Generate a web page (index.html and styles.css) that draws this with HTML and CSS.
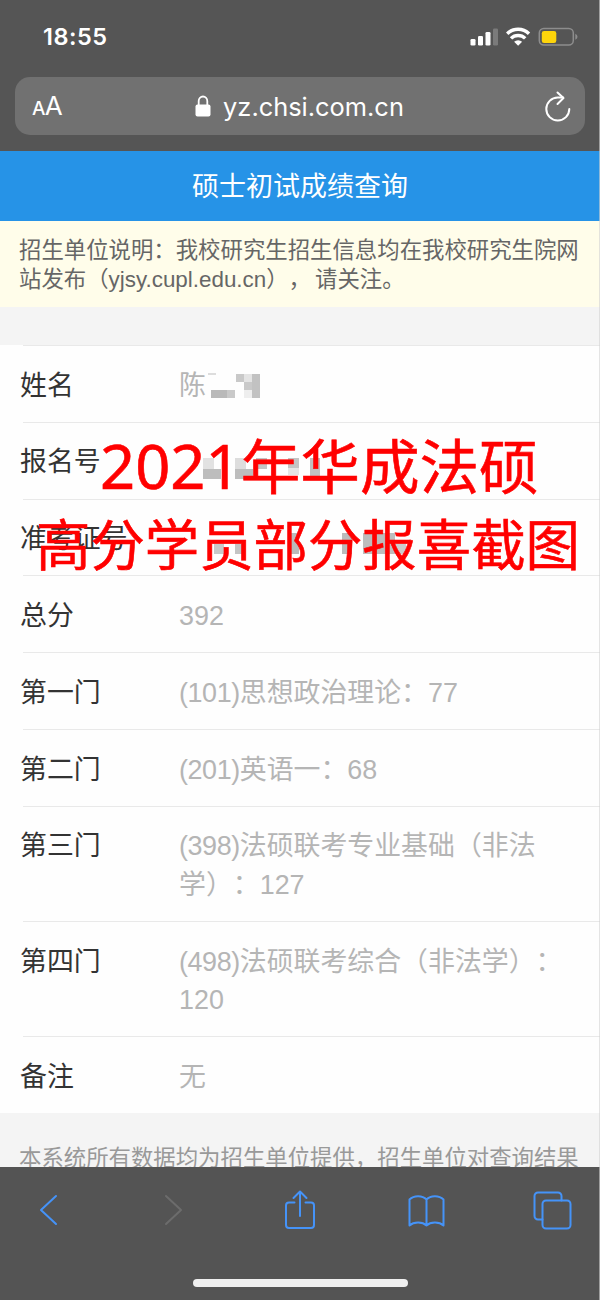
FILE: index.html
```html
<!DOCTYPE html>
<html lang="zh-CN">
  <head>
    <meta charset="UTF-8" />
    <meta name="viewport" content="width=device-width, initial-scale=1.0" />
    <title>硕士初试成绩查询</title>
    <link rel="stylesheet" href="styles.css">
  </head>
  <body>
    <div class="phone">
      <header class="browser">
        <div class="status">
          <span class="time">18:55</span>
          <svg class="status-icons" width="110" height="20" viewBox="0 0 110 20">
            <g fill="#fff">
              <rect x="0.5" y="12" width="5" height="6.5" rx="1.3" />
              <rect x="8" y="9" width="5" height="9.5" rx="1.3" />
              <rect x="15.5" y="5" width="5" height="13.5" rx="1.3" />
              <rect x="23" y="1.5" width="5" height="17" rx="1.3" fill="#7b7b7b" />
            </g>
            <g fill="none" stroke="#fff" stroke-width="3.4">
              <path d="M37.2 6.7 A15.5 15.5 0 0 1 59 6.7" />
              <path d="M41 11.4 A10 10 0 0 1 55.2 11.4" />
            </g>
            <path d="M44.1 14.8 A6 6 0 0 1 52.1 14.8 L48.1 18.8 Z" fill="#fff" />
            <rect x="69.3" y="1.5" width="34" height="16.5" rx="4.5" fill="none" stroke="#8d8d8d" stroke-width="1.5" />
            <rect x="71.8" y="4" width="14.5" height="12" rx="2.3" fill="#fed50b" />
            <path d="M105.3 6.7 Q107.5 7.5 107.5 9.8 Q107.5 12 105.3 12.8 Z" fill="#8d8d8d" />
          </svg>
        </div>
        <div class="address">
          <span class="text-size"><small>A</small>A</span>
          <div class="site">
            <svg width="16" height="22" viewBox="0 0 16 22">
              <rect x="0.5" y="9.5" width="15" height="12" rx="2" fill="#fff" />
              <path d="M3.7 10 V6 a4.3 4.5 0 0 1 8.6 0 V10" fill="none" stroke="#fff" stroke-width="1.8" />
            </svg>
            <span class="url">yz.chsi.com.cn</span>
          </div>
          <svg class="reload" width="28" height="32" viewBox="0 0 28 32" fill="none" stroke="#fff" stroke-width="2" stroke-linecap="round" stroke-linejoin="round">
            <path d="M25.3 18 A11.5 11.5 0 1 1 13.8 6.5 H19" />
            <path d="M13.5 1.5 L19.5 7 L13.5 13" />
          </svg>
        </div>
      </header>

      <h1 class="title">硕士初试成绩查询</h1>
      <p class="notice">招生单位说明：我校研究生招生信息均在我校研究生院网<br>站发布（yjsy.cupl.edu.cn），<span class="follow">请关注。</span></p>

      <main class="scores">
        <dl class="row">
          <dt>姓名</dt>
          <dd class="masked">陈<svg class="name-mask" width="54" height="26" viewBox="0 0 54 26">
              <rect x="2" y="0" width="8" height="2" fill="#ddd" />
              <rect x="5" y="17" width="17" height="8" fill="#b9b9b9" />
              <rect x="21" y="17" width="8" height="8" fill="#c9c9c9" />
              <rect x="30" y="1" width="8" height="8" fill="#c9c9c9" />
              <rect x="38" y="1" width="8" height="8" fill="#e4e4e4" />
              <rect x="38" y="9" width="8" height="8" fill="#c9c9c9" />
              <rect x="38" y="17" width="8" height="8" fill="#eee" />
              <rect x="46" y="1" width="8" height="24" fill="#c2c2c2" />
            </svg></dd>
        </dl>
        <dl class="row">
          <dt>报名号</dt>
          <dd class="masked"><svg class="number-mask" width="130" height="22" viewBox="0 0 130 22">
              <rect x="0" y="0" width="11" height="11" fill="#e2e2e2" />
              <rect x="0" y="11" width="18" height="10" fill="#bdbdbd" />
              <rect x="32" y="0" width="11" height="11" fill="#ddd" />
              <rect x="32" y="11" width="18" height="10" fill="#bdbdbd" />
              <rect x="53" y="0" width="11" height="11" fill="#c4c4c4" />
              <rect x="85" y="0" width="11" height="10" fill="#c4c4c4" />
              <rect x="85" y="10" width="11" height="7" fill="#e6e6e6" />
              <rect x="107" y="0" width="10" height="19" fill="#c0c0c0" />
            </svg></dd>
        </dl>
        <dl class="row">
          <dt>准考证号</dt>
          <dd class="masked"><svg class="ticket-mask" width="200" height="22" viewBox="0 0 200 22">
              <rect x="0" y="11" width="10" height="10" fill="#c9c9c9" />
              <rect x="21" y="11" width="8" height="10" fill="#c4c4c4" />
              <rect x="75" y="0" width="10" height="21" fill="#bbb" />
              <rect x="128" y="0" width="10" height="21" fill="#bbb" />
              <rect x="149" y="0" width="32" height="21" fill="#bdbdbd" />
              <rect x="181" y="11" width="11" height="10" fill="#ccc" />
            </svg></dd>
        </dl>
        <dl class="row"><dt>总分</dt><dd>392</dd></dl>
        <dl class="row"><dt>第一门</dt><dd><span class="code">(101)</span>思想政治理论：77</dd></dl>
        <dl class="row"><dt>第二门</dt><dd><span class="code">(201)</span>英语一：68</dd></dl>
        <dl class="row"><dt>第三门</dt><dd><span class="code">(398)</span>法硕联考专业基础（非法<br>学）：127</dd></dl>
        <dl class="row"><dt>第四门</dt><dd><span class="code">(498)</span>法硕联考综合（非法学）：<br>120</dd></dl>
        <dl class="row"><dt>备注</dt><dd>无</dd></dl>
      </main>

      <p class="source">本系统所有数据均为招生单位提供，招生单位对查询结果</p>

      <footer class="toolbar">
        <nav class="tools">
          <svg width="20" height="32" viewBox="0 0 20 32"><path d="M18 2 L3 16 L18 30" /></svg>
          <svg class="disabled" width="20" height="32" viewBox="0 0 20 32"><path d="M2 2 L17 16 L2 30" /></svg>
          <svg width="32" height="40" viewBox="0 0 32 40">
            <path d="M10.5 12.5 H5 a3 3 0 0 0 -3 3 V35 a3 3 0 0 0 3 3 H27 a3 3 0 0 0 3 -3 V15.5 a3 3 0 0 0 -3 -3 H21.5" />
            <path d="M16 26 V1.5 M9.5 8 L16 1.5 L22.5 8" />
          </svg>
          <svg class="book" width="37" height="34" viewBox="0 0 37 34">
            <path d="M18.5 31.5 V5.5 C14.5 1.3 6 1 1.5 5.5 V31.5 C6 27.5 14.5 27.8 18.5 31.5 C22.5 27.8 31 27.5 35.5 31.5 V5.5 C31 1 22.5 1.3 18.5 5.5" />
          </svg>
          <svg width="39" height="39" viewBox="0 0 39 39">
            <path d="M9.5 28.5 H5 a3.5 3.5 0 0 1 -3.5 -3.5 V5 A3.5 3.5 0 0 1 5 1.5 H25 A3.5 3.5 0 0 1 28.5 5 V9.5" />
            <rect x="9.5" y="9.5" width="28" height="28" rx="3.5" />
          </svg>
        </nav>
        <div class="home-bar"></div>
      </footer>

      <div class="caption">
        <div class="caption-top"><span>2021</span>年华成法硕</div>
        <div class="caption-bottom">高分学员部分报喜截图</div>
      </div>
    </div>
  </body>
</html>
```
FILE: styles.css
```css
* {
  box-sizing: border-box;
}

body {
  margin: 0;
  font-family: "Liberation Sans", "Noto Sans CJK SC", sans-serif;
  background-color: #f4f4f4;
  text-spacing-trim: space-all;
}

.phone {
  position: relative;
  width: 600px;
  height: 1300px;
  display: flex;
  flex-direction: column;
  overflow: hidden;
}

/* thin edge on the right side */
.phone::after {
  content: "";
  position: absolute;
  top: 0;
  right: 0;
  bottom: 0;
  width: 1px;
  background-color: rgba(210, 210, 210, 0.6);
}

/* browser bar */
.browser {
  height: 151px;
  flex: none;
  padding: 0 15px;
  background-color: #555;
  color: #fff;
}

.status {
  height: 77px;
  display: flex;
  justify-content: space-between;
  padding: 22px 5px 0 28px;
}

.time {
  font: 600 23.5px/30px Inter, sans-serif;
  letter-spacing: 0.5px;
}

.status-icons {
  margin-top: 5px;
}

.address {
  height: 58px;
  display: flex;
  justify-content: space-between;
  align-items: center;
  padding: 1px 13px 0 17px;
  border-radius: 15px;
  background-color: #717171;
}

.text-size {
  width: 32px;
  padding-top: 2px;
  font: 26px/34px Inter, sans-serif;
  letter-spacing: -0.8px;
}

.text-size small {
  font-size: 19px;
  font-weight: 500;
}

.site {
  display: flex;
  align-items: center;
  gap: 12px;
  margin-right: 9px;
}

.site svg {
  margin-bottom: 2px;
}

.url {
  font: 25.4px/34px Inter, sans-serif;
}

/* page */
.title {
  height: 70px;
  flex: none;
  margin: 0;
  background-color: #2693e7;
  color: #fff;
  font-size: 27px;
  font-weight: normal;
  line-height: 72px;
  text-align: center;
}

.notice {
  height: 86px;
  flex: none;
  margin: 0 0 38px;
  padding: 15px 19px;
  background-color: #fffdea;
  color: #666;
  font-size: 22.4px;
  line-height: 29px;
  white-space: nowrap;
}

.follow {
  margin-left: 4px;
}

.scores {
  flex: none;
  background-color: #fefefe;
}

.row {
  display: flex;
  margin: 0 0 0 20px;
  padding: 21.7px 0 16.7px;
  font-size: 26.9px;
  line-height: 38.4px;
  background: linear-gradient(#e9e9e9, #e9e9e9) 3px 0 / 100% 1px no-repeat;
}

.row dt {
  width: 159px;
  flex: none;
  color: #333;
}

.row dd {
  margin: 0;
  color: #b5b5b5;
  white-space: nowrap;
}

.code {
  letter-spacing: -0.4px;
}

.row .masked {
  height: 38.4px;
  display: flex;
  align-items: flex-start;
}

.name-mask {
  margin-top: 6px;
}

.number-mask {
  margin: 15px 0 0 24px;
}

.ticket-mask {
  margin: 13px 0 0 35px;
}

.source {
  flex: none;
  margin: 31px 0 0;
  padding-left: 19px;
  color: #999;
  font-size: 22.4px;
  line-height: 30px;
  white-space: nowrap;
}

/* bottom toolbar */
.toolbar {
  position: absolute;
  left: 0;
  right: 0;
  bottom: 0;
  height: 133px;
  background-color: #545454;
}

.tools {
  height: 86px;
  display: grid;
  grid-template-columns: repeat(5, 126px);
  justify-content: center;
  justify-items: center;
  align-items: center;
  fill: none;
  stroke: #4593f8;
  stroke-width: 2;
  stroke-linecap: round;
  stroke-linejoin: round;
}

.tools .disabled {
  stroke: #6c6c6c;
}

.tools .book {
  margin-top: 2px;
}

.home-bar {
  width: 215px;
  height: 8px;
  margin: 26px auto 0;
  border-radius: 4px;
  background-color: #efefef;
}

/* red caption over the rows */
.caption {
  position: absolute;
  top: 425px;
  left: 0;
  color: #f00;
  font-family: "Noto Sans CJK SC", sans-serif;
  white-space: nowrap;
  -webkit-text-stroke: 0.6px #f00;
}

.caption-top {
  padding-left: 100px;
  font-size: 59.6px;
  line-height: 76px;
}

.caption-top span {
  font-family: "Noto Sans", sans-serif;
  font-size: 61.5px;
}

.caption-bottom {
  padding-left: 36px;
  font-size: 54.4px;
  line-height: 77px;
}
```
